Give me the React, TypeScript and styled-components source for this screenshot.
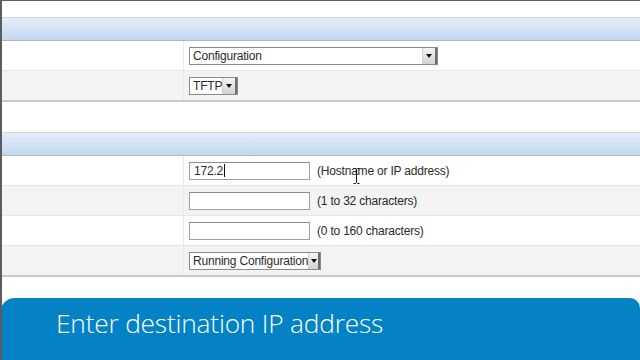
import React, { FC } from "react";
import styled, { createGlobalStyle } from "styled-components";

const GlobalStyle = createGlobalStyle`
  html, body {
    margin: 0;
    padding: 0;
    background: #ffffff;
  }
`;

const Screen = styled.div`
  position: relative;
  width: 640px;
  height: 360px;
  overflow: hidden;
  box-sizing: border-box;
  background: #ffffff;
  border-top: 1px solid #5c5c5c;
  border-left: 2px solid #5c5c5c;
  padding-top: 16px;
  font-family: "Liberation Sans", Arial, sans-serif;
  font-size: 12px;
  letter-spacing: -0.2px;
  color: #2a2a2a;
`;

const Section = styled.div<{ $gap?: number }>`
  display: flex;
  flex-direction: column;
  margin-bottom: ${(p) => p.$gap ?? 0}px;
`;

const HeaderBar = styled.div`
  height: 22px;
  border-top: 1px solid #cdd7e1;
  border-bottom: 1px solid #aab8c8;
  background: linear-gradient(#e4eef9, #c3d7ef);
`;

const Row = styled.div<{ $shade?: boolean; $last?: boolean }>`
  display: grid;
  grid-template-columns: 182px 1fr;
  height: 29px;
  background: ${(p) => (p.$shade ? "#f3f3f3" : "#ffffff")};
  border-bottom: ${(p) => (p.$last ? "2px solid #c9c9c9" : "1px solid #e6e6e6")};
`;

const LabelCell = styled.div`
  border-right: 1px solid #e9e9e9;
`;

const FieldCell = styled.div`
  display: flex;
  align-items: center;
  gap: 7px;
  padding-left: 5px;
`;

const SelectBox = styled.div<{ $width: number }>`
  display: flex;
  align-items: center;
  box-sizing: border-box;
  width: ${(p) => p.$width}px;
  height: 18px;
  border: 1px solid #8a8a8a;
  background: #ffffff;
  padding-left: 3px;
  white-space: nowrap;
`;

const SelectText = styled.span`
  flex: 1;
  line-height: 16px;
`;

const ArrowButton = styled.span`
  display: flex;
  align-items: center;
  justify-content: center;
  box-sizing: border-box;
  width: 15px;
  height: 16px;
  border-left: 1px solid #d0d0d0;
  border-right: 2px solid #6e6e6e;
  background: linear-gradient(#f5f5f5, #d2d2d2);
`;

const Triangle = styled.span`
  width: 0;
  height: 0;
  border-left: 3px solid transparent;
  border-right: 3px solid transparent;
  border-top: 4px solid #111111;
`;

const TextInput = styled.div`
  display: flex;
  align-items: center;
  box-sizing: border-box;
  width: 121px;
  height: 18px;
  border: 1px solid #a0a0a0;
  border-top-color: #8a8a8a;
  background: #ffffff;
  padding-left: 4px;
`;

const Caret = styled.span`
  display: inline-block;
  width: 1px;
  height: 13px;
  margin-left: 1px;
  background: #111111;
`;

const Hint = styled.span`
  color: #2a2a2a;
`;

const Pointer = styled.svg`
  position: absolute;
  left: 351px;
  top: 167px;
`;

const Banner = styled.div`
  position: absolute;
  left: -2px;
  right: 0;
  top: 297px;
  bottom: 0;
  background: #0383c5;
  border-radius: 15px 10px 0 0;
  padding: 9px 0 0 56px;
  box-sizing: border-box;
`;

const Caption = styled.div`
  font-family: "Open Sans", "Noto Sans", sans-serif;
  font-weight: 300;
  font-size: 26.3px;
  line-height: 32px;
  color: #ffffff;
`;

const Select: FC<{ width: number; value: string }> = ({ width, value }) => (
  <SelectBox $width={width}>
    <SelectText>{value}</SelectText>
    <ArrowButton>
      <Triangle />
    </ArrowButton>
  </SelectBox>
);

const App: FC = () => {
  return (
    <>
      <GlobalStyle />
      <Screen>
        <Section $gap={30}>
          <HeaderBar />
          <Row>
            <LabelCell />
            <FieldCell>
              <Select width={249} value="Configuration" />
            </FieldCell>
          </Row>
          <Row $shade $last>
            <LabelCell />
            <FieldCell>
              <Select width={49} value="TFTP" />
            </FieldCell>
          </Row>
        </Section>
        <Section>
          <HeaderBar />
          <Row>
            <LabelCell />
            <FieldCell>
              <TextInput>
                172.2
                <Caret />
              </TextInput>
              <Hint>(Hostname or IP address)</Hint>
            </FieldCell>
          </Row>
          <Row $shade>
            <LabelCell />
            <FieldCell>
              <TextInput />
              <Hint>(1 to 32 characters)</Hint>
            </FieldCell>
          </Row>
          <Row>
            <LabelCell />
            <FieldCell>
              <TextInput />
              <Hint>(0 to 160 characters)</Hint>
            </FieldCell>
          </Row>
          <Row $shade $last>
            <LabelCell />
            <FieldCell>
              <Select width={132} value="Running Configuration" />
            </FieldCell>
          </Row>
        </Section>
        <Pointer width="7" height="16" viewBox="0 0 7 16">
          <path d="M0.5 0.5 H2.5 L3.5 1.5 L4.5 0.5 H6.5 M3.5 1.5 V14.5 M0.5 15.5 H2.5 L3.5 14.5 L4.5 15.5 H6.5" stroke="#111" strokeWidth="1" fill="none" />
        </Pointer>
        <Banner>
          <Caption>Enter destination IP address</Caption>
        </Banner>
      </Screen>
    </>
  );
};

export default App;
